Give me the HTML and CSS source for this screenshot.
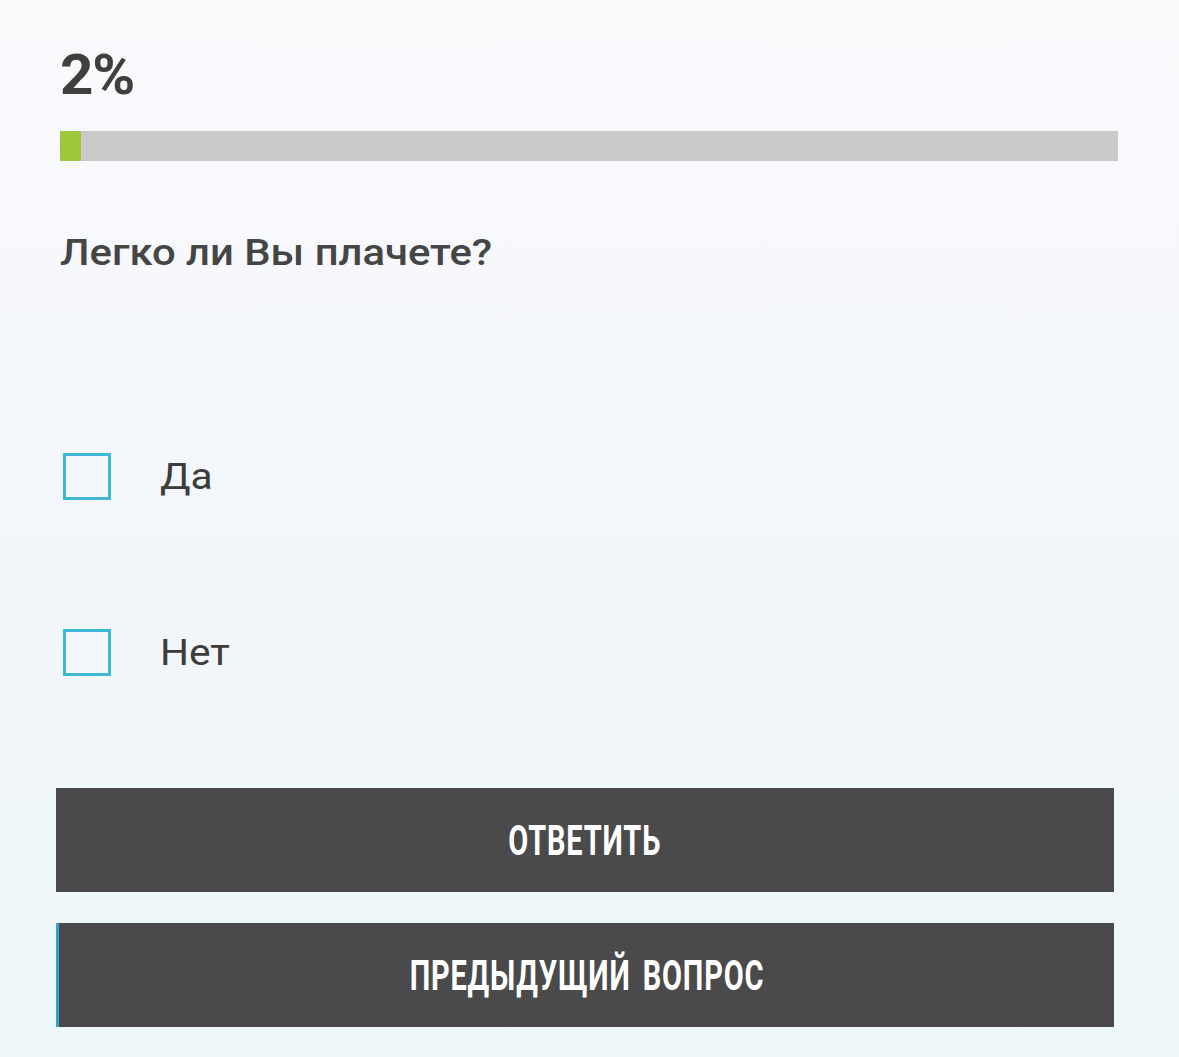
FILE: index.html
```html
<!DOCTYPE HTML>
<html>
	<head>
		<meta http-equiv="Content-Type" content="text/html; charset=UTF-8" />
		<title>Тест</title>
		<link rel="stylesheet" href="styles.css">
	</head>
	<body>
		<div class="quiz">
			<div class="percent"><span class="narrow">2%</span></div>
			<div class="progress">
				<div class="progress_fill" style="width: 2%"></div>
			</div>
			<div class="question"><span class="wide">Легко ли Вы плачете?</span></div>
			<ul class="answers">
				<li class="answer">
					<span class="check"></span>
					<span class="answer_text wide">Да</span>
				</li>
				<li class="answer">
					<span class="check"></span>
					<span class="answer_text wide">Нет</span>
				</li>
			</ul>
			<div class="buttons">
				<div class="btn"><span class="btn_text">ОТВЕТИТЬ</span></div>
				<div class="btn btn--prev"><span class="btn_text">ПРЕДЫДУЩИЙ ВОПРОС</span></div>
			</div>
		</div>
	</body>
</html>
```

FILE: styles.css
```css
html, body {
	margin: 0;
	padding: 0;
}
body {
	font-family: Roboto, "Noto Sans", Arial, sans-serif;
	color: #444;
	background: linear-gradient(to bottom, #f9fafc 0%, #f3f6fa 50%, #edf7fa 100%);
	height: 1057px;
	overflow: hidden;
}
.quiz {
	padding: 40px 61px 0 60px;
}
.wide {
	display: inline-block;
	transform: scaleX(1.13);
	transform-origin: left center;
}
.narrow {
	display: inline-block;
	transform: scaleX(1.04);
	transform-origin: left center;
}
.percent {
	font-family: Roboto, sans-serif;
	font-weight: bold;
	font-size: 56px;
	line-height: 70px;
	color: #3f3f3f;
	letter-spacing: -1px;
}
.progress {
	margin-top: 21px;
	height: 30px;
	background-color: #c9c9c9;
}
.progress_fill {
	height: 100%;
	background-color: #9ec73b;
}
.question {
	margin-top: 68px;
	font-size: 37px;
	font-weight: 500;
	line-height: 48px;
	color: #454545;
}
ul {
	list-style: none;
	margin: 0;
	padding: 0;
}
.answers {
	margin-top: 176px;
}
.answer {
	display: flex;
	align-items: center;
	height: 47px;
	margin-bottom: 129px;
}
.check {
	box-sizing: border-box;
	width: 48px;
	height: 47px;
	margin-left: 3px;
	border: 3px solid #3fb8d8;
	background: #f5f8fb;
}
.answer_text {
	margin-left: 49px;
	font-size: 36px;
	color: #3c3c3c;
}
.buttons {
	margin: -17px 4px 0 -4px;
	display: flex;
	flex-direction: column;
	gap: 31px;
}
.btn {
	height: 104px;
	line-height: 106px;
	background-color: #4a4a4c;
	color: #fff;
	text-align: center;
	font-family: Roboto, sans-serif;
	font-weight: bold;
	font-size: 42px;
	cursor: pointer;
}
.btn_text {
	display: inline-block;
	transform: scaleX(0.69);
	letter-spacing: 1.2px;
	word-spacing: 6px;
}
.btn--prev {
	border-left: 3px solid #2fa6d3;
}
```
